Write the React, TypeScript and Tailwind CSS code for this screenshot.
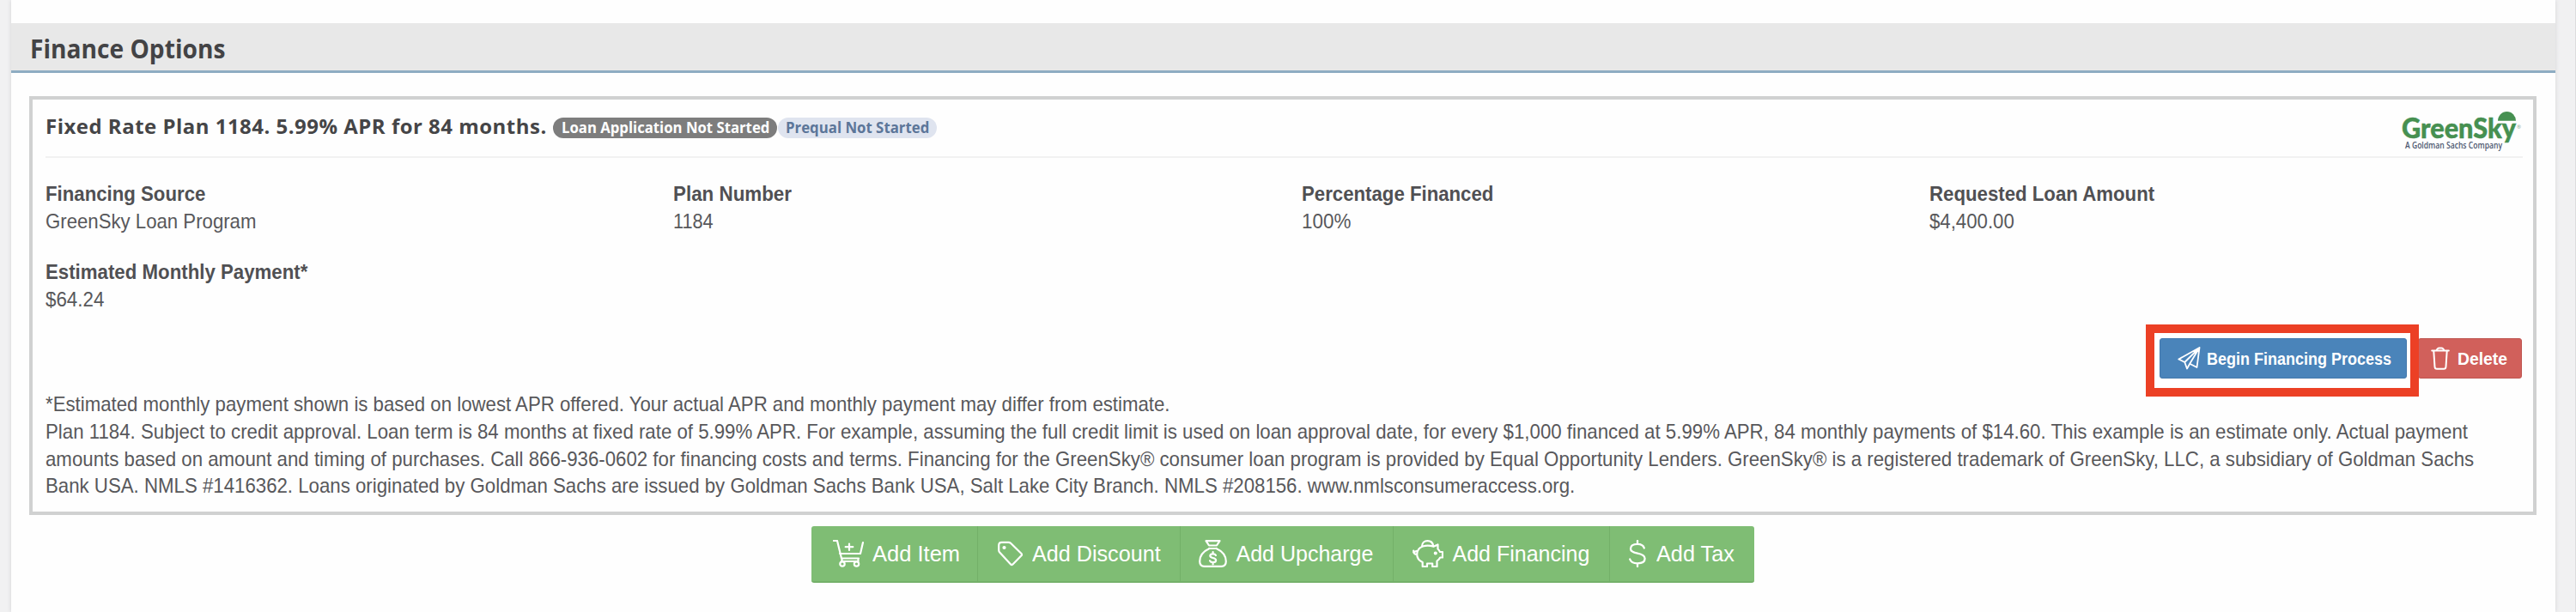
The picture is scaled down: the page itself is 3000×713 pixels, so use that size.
import React, { useLayoutEffect, useRef, useState } from "react";

/* A single line of text, condensed or widened to an exact width. */
function Fit({ w, className = "", children }: { w: number; className?: string; children: React.ReactNode }) {
  const ref = useRef<HTMLSpanElement>(null);
  const [scale, setScale] = useState(1);
  useLayoutEffect(() => {
    if (ref.current) setScale(w / ref.current.offsetWidth);
  }, [w]);
  return (
    <span className="block" style={{ width: w }}>
      <span
        ref={ref}
        className={"block w-max origin-left whitespace-nowrap " + className}
        style={{ transform: `scaleX(${scale})` }}
      >
        {children}
      </span>
    </span>
  );
}

function Field({ label, value, lw, vw }: { label: string; value: string; lw: number; vw: number }) {
  return (
    <div className="w-[731.4px] shrink-0 text-[24px] leading-[31.5px]">
      <Fit w={lw} className="font-bold text-[#505053]">{label}</Fit>
      <Fit w={vw}>{value}</Fit>
    </div>
  );
}

const line = { fill: "none", stroke: "currentColor", strokeLinejoin: "round" as const, strokeLinecap: "round" as const };

const CartIcon = () => (
  <svg className="h-[32px] w-[36px]" viewBox="0 0 36 32" {...line} strokeWidth="2.2">
    <path d="M1 1h4l5 20.500h20M8 16h24l3-13M10.500 21.500v3.500M29.500 21.500V25M10 25h18M19 4.500v7.500M14.700 8.200h8.600" />
    <circle cx="11" cy="28" r="2.700" />
    <circle cx="27.500" cy="28" r="2.700" />
  </svg>
);
const TagIcon = () => (
  <svg className="h-[32px] w-[30px]" viewBox="0 0 30 32" {...line} strokeWidth="2.2">
    <path d="M4.500 2.800h8c1 0 1.800.3 2.500 1l12.300 12c.9.900.9 1.700.2 2.500L17.700 28.300c-.9 1-1.700 1-2.600.1L2.200 14.600c-.8-.9-1-1.600-1-2.600V6.200c0-2.300 1.200-3.400 3.300-3.400z" />
    <circle cx="7.500" cy="9" r="1" fill="currentColor" />
  </svg>
);
const BagIcon = () => (
  <svg className="h-[32px] w-[33px]" viewBox="0 0 33 32" {...line} strokeWidth="2.2">
    <path d="M8.500 1.200h16l-3.500 5.300h-9zM12 10h9M12.500 10C6 13 1.200 18 1.200 25c0 4 2 5.800 5.500 5.800h19.600c3.500 0 5.500-1.800 5.500-5.800 0-7-4.800-12-11.300-15" />
    <path d="M20 18c-.6-1.200-1.800-1.700-3.400-1.700-2 0-3.300.9-3.300 2.300 0 1.500 1.300 2 3.300 2.400s3.500 1.100 3.500 2.700-1.500 2.500-3.500 2.500c-1.700 0-3-.6-3.600-1.900M16.600 14v2.300M16.600 26.200v2.300" />
  </svg>
);
const PigIcon = () => (
  <svg className="h-[32px] w-[36px]" viewBox="0 0 36 32" {...line} strokeWidth="2.2">
    <path d="M12 7.500c3.500-1 8.500-1 12.500.3L29.500 5.500v5c1.300 1.200 2 2.300 2.400 3.500H35v6.500h-2.800c-.8 1.700-2 3-3.700 4.200V31h-5.300v-3.500H17V31h-5.300v-5C7.500 24 5.200 21 5.200 17c0-4.500 2.500-8 6.800-9.500zM11 7.500C11 3.500 14 1.100 17.500 1.100s6 2 6.500 5.500M5.200 17C2.500 17 1 15 1.200 12.500M1.200 14.500l3.300-1.500" />
    <circle cx="26.800" cy="15.500" r="1" fill="currentColor" />
  </svg>
);
const DollarIcon = () => (
  <svg className="h-[32px] w-[20px]" viewBox="0 0 20 32" {...line} strokeWidth="2.300">
    <path d="M17.800 9.500C17 6.500 14 4.800 10 4.800c-4.800 0-8 2-8 5.400 0 3.600 3.300 4.600 8 5.500 5.200 1 8.600 2.300 8.600 6.100 0 3.500-3.500 5.500-8.600 5.500-4.500 0-7.800-1.600-8.800-4.800M10 1v3.800M10 27.300V31" />
  </svg>
);
const PlaneIcon = () => (
  <svg className="h-[27px] w-[27px] shrink-0" viewBox="0 0 27 27" {...line} strokeWidth="1.800">
    <path d="M25.500 1L1.300 14.500l7 3.500zM25.500 1L22.500 24l-8.300-4.200zM25.500 1L8.300 18l2.700 7.500 3.200-5.700z" />
  </svg>
);
const TrashIcon = () => (
  <svg className="h-[27px] w-[22px] shrink-0" viewBox="0 0 22 27" {...line} strokeWidth="2">
    <path d="M1.200 4.600h19.600M3.300 5l1.200 18.200c.1 1.800.9 2.600 2.500 2.600h8c1.600 0 2.400-.8 2.500-2.600L18.700 5M6.500 4.300c.8-2 1.800-2.900 3-2.900h3c1.200 0 2.200.9 3 2.900" />
  </svg>
);

const actions = [
  { label: "Add Item", w: 193, gap: 10, pl: 25, tw: 102, Icon: CartIcon },
  { label: "Add Discount", w: 235.5, gap: 10, pl: 23, tw: 150, Icon: TagIcon },
  { label: "Add Upcharge", w: 248, gap: 11, pl: 21, tw: 160, Icon: BagIcon },
  { label: "Add Financing", w: 252.5, gap: 11, pl: 22, tw: 160, Icon: PigIcon },
  { label: "Add Tax", w: 168, gap: 12, pl: 21.5, tw: 91, Icon: DollarIcon },
];

export default function App() {
  return (
    <div className="flex h-[713px] w-[3000px] overflow-hidden border-r border-[#dcdcdd] bg-[#f1f1f2] pl-[13px] font-['Liberation_Sans',Arial,sans-serif] text-[#58585b]">
      <main className="h-[713px] w-[2963px] bg-[#fefefe] pt-[27px] shadow-[0_0_5px_#d2d2d6]">
        <header className="flex h-[58px] items-center border-b-[3px] border-[#8eacc2] bg-[#e8e8e8] pl-[22px] pt-[3px] font-['Open_Sans',sans-serif]">
          <Fit w={227} className="text-[31px] font-bold leading-[40px] text-[#434345]">Finance Options</Fit>
        </header>
        <section className="ml-[21px] mt-[27px] h-[488px] w-[2920px] border-[4px] border-[#d0d1d1] pl-[15px] pr-[13px]">
          <div className="flex h-[68px] w-[2885px] items-start border-b-2 border-[#f2f2f2] font-['Open_Sans',sans-serif]">
            <div className="mt-[11.5px]">
              <Fit w={584} className="text-[24px] font-bold leading-[38px] tracking-[0.5px] text-[#454547]">Fixed Rate Plan 1184. 5.99% APR for 84 months.</Fit>
            </div>
            <div className="ml-[7px] mt-[21px] flex h-[24px] w-[261px] items-center justify-center rounded-full bg-[#7d7d7d] pb-[1px] text-white">
              <Fit w={242} className="text-[17px] font-bold leading-[24px]">Loan Application Not Started</Fit>
            </div>
            <div className="ml-[1px] mt-[21px] flex h-[24px] w-[185px] items-center justify-center rounded-full bg-[#dfe4ef] pb-[1px] text-[#5c7699]">
              <Fit w={167} className="text-[17px] font-bold leading-[24px]">Prequal Not Started</Fit>
            </div>
            <svg className="ml-auto mt-[12px] h-[48px] w-[142px]" viewBox="0 0 142 48">
              <text x="1" y="33" textLength="133" lengthAdjust="spacingAndGlyphs" fontFamily="Lato" fontWeight="900" fontSize="31.500" fill="#469051" stroke="#469051" strokeWidth="0.500">GreenSky</text>
              <path d="M113 12.700a10.500 10.700 0 0 1 21 0z" fill="#469051" />
              <text x="5" y="45" textLength="113" lengthAdjust="spacingAndGlyphs" fontFamily="Open Sans" fontWeight="600" fontSize="10" fill="#4d5870">A Goldman Sachs Company</text>
              <text x="135" y="22" fontFamily="Open Sans" fontSize="6" fill="#8aa893">®</text>
            </svg>
          </div>
          <div className="mt-[26px] flex">
            <Field label="Financing Source" value="GreenSky Loan Program" lw={186} vw={245} />
            <Field label="Plan Number" value="1184" lw={138} vw={47} />
            <Field label="Percentage Financed" value="100%" lw={223} vw={57} />
            <Field label="Requested Loan Amount" value="$4,400.00" lw={262} vw={99} />
          </div>
          <div className="mt-[28px]">
            <Field label="Estimated Monthly Payment*" value="$64.24" lw={305} vw={68} />
          </div>
          <div className="mt-[14px] flex h-[77px] items-start justify-end text-white">
            <div className="z-10 h-[84px] w-[318px] border-[10px] border-[#ec4025] bg-white pl-[6px] pt-[6px]">
              <button className="flex h-[47px] w-[288px] items-center rounded-[3px] border border-[#4479ad] bg-[#4a84ba] pl-[20px]">
                <PlaneIcon />
                <span className="ml-[7px]"><Fit w={215} className="text-[20px] font-bold leading-[30px]">Begin Financing Process</Fit></span>
              </button>
            </div>
            <button className="-ml-[1px] mt-[16px] flex h-[47px] w-[121px] items-center rounded-[3px] border border-[#bf5550] bg-[#d1605b] pl-[14px]">
              <TrashIcon />
              <span className="ml-[9px]"><Fit w={58} className="text-[20px] font-bold leading-[30px]">Delete</Fit></span>
            </button>
          </div>
          <div className="text-[24px] leading-[31.500px]">
            <Fit w={1310} className="h-[32px]">*Estimated monthly payment shown is based on lowest APR offered. Your actual APR and monthly payment may differ from estimate.</Fit>
            <Fit w={2821}>Plan 1184. Subject to credit approval. Loan term is 84 months at fixed rate of 5.99% APR. For example, assuming the full credit limit is used on loan approval date, for every $1,000 financed at 5.99% APR, 84 monthly payments of $14.60. This example is an estimate only. Actual payment</Fit>
            <Fit w={2828}>amounts based on amount and timing of purchases. Call 866-936-0602 for financing costs and terms. Financing for the GreenSky® consumer loan program is provided by Equal Opportunity Lenders. GreenSky® is a registered trademark of GreenSky, LLC, a subsidiary of Goldman Sachs</Fit>
            <Fit w={1781}>Bank USA. NMLS #1416362. Loans originated by Goldman Sachs are issued by Goldman Sachs Bank USA, Salt Lake City Branch. NMLS #208156. www.nmlsconsumeraccess.org.</Fit>
          </div>
        </section>
        <nav className="ml-[932px] mt-[13px] flex h-[66px] w-[1098px] overflow-hidden rounded-[3px] border-b-2 border-[#74b069] bg-[#7fbd74] text-white">
          {actions.map(({ label, w, gap, pl, tw, Icon }, i) => (
            <button key={label} className={"flex h-full shrink-0 items-center " + (i ? "border-l border-[#73b068]" : "")} style={{ width: w, paddingLeft: pl, gap }}>
              <Icon />
              <Fit w={tw} className="text-[25px] leading-[34px]">{label}</Fit>
            </button>
          ))}
        </nav>
      </main>
    </div>
  );
}
